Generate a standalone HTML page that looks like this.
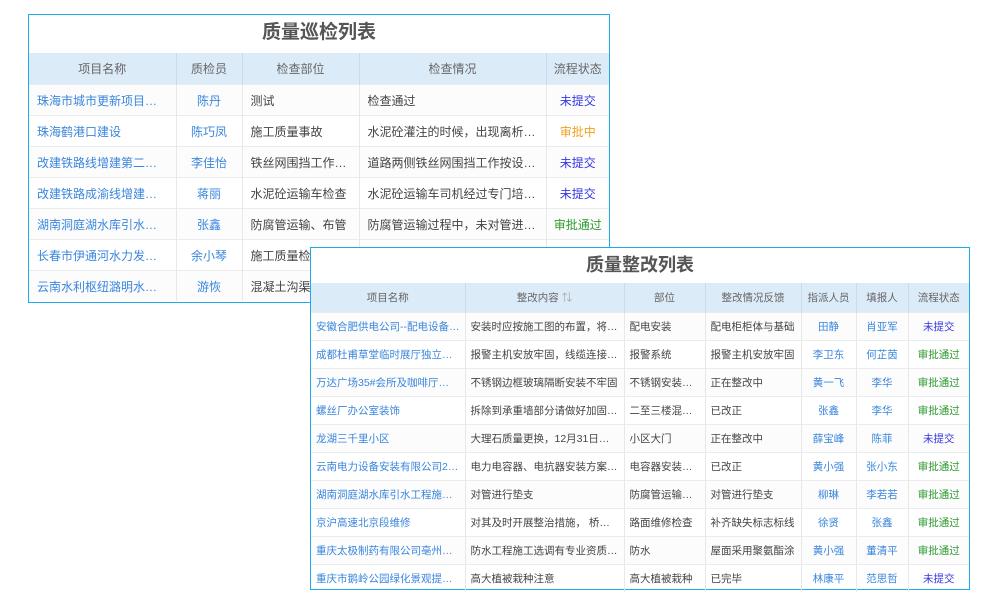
<!DOCTYPE html>
<html><head><meta charset="utf-8"><style>
body{margin:0;width:1000px;height:600px;background:#fff;position:relative;overflow:hidden;font-family:"Liberation Sans","Noto Sans CJK SC",sans-serif;}
.box{position:absolute;border:1px solid #1fa9ec;background:#fff;box-sizing:border-box;}
.title{text-align:center;font-weight:bold;color:#555;font-size:19px;}
table{border-collapse:collapse;table-layout:fixed;width:100%;}
th{background:#dcebf8;color:#666;font-weight:normal;border-right:1px solid #c9dcef;font-size:12px;}
td{border-right:1px solid #e8e8e8;border-top:1px solid #ececec;white-space:nowrap;overflow:hidden;text-overflow:ellipsis;color:#444;}
tr:nth-child(even) td{background:#fcfcfd;}
th:last-child,td:last-child{border-right:none;}
.l{color:#3a86dc;}.c{text-align:center;}
.u{color:#3535e6;text-align:center;}.p{color:#f2a21f;text-align:center;}.g{color:#2e9a2e;text-align:center;}
#t1 td,#t1 th{font-size:12px;padding:0 8px;height:30px;}
#t1 th{height:31px;}
#t1 td:last-child,#t1 th:last-child{padding:0 2px;}
#t2 td,#t2 th{font-size:10.5px;padding:0 5px;height:27px;}
#t2 th{height:29px;}
#t2 td:last-child,#t2 th:last-child{padding:0 2px;}
</style></head><body>
<div class="box" id="t1" style="left:28px;top:14px;width:582px;height:289px;">
<div class="title" style="height:38px;line-height:36px;">质量巡检列表</div>
<table><colgroup><col style="width:147px"><col style="width:66px"><col style="width:117px"><col style="width:187px"><col></colgroup>
<tr><th>项目名称</th><th>质检员</th><th>检查部位</th><th>检查情况</th><th>流程状态</th></tr>
<tr><td class="l">珠海市城市更新项目紫荆园</td><td class="l c">陈丹</td><td>测试</td><td>检查通过</td><td class="u">未提交</td></tr>
<tr><td class="l">珠海鹤港口建设</td><td class="l c">陈巧凤</td><td>施工质量事故</td><td>水泥砼灌注的时候，出现离析现象</td><td class="p">审批中</td></tr>
<tr><td class="l">改建铁路线增建第二线工程</td><td class="l c">李佳怡</td><td>铁丝网围挡工作检查</td><td>道路两侧铁丝网围挡工作按设计要求</td><td class="u">未提交</td></tr>
<tr><td class="l">改建铁路成渝线增建第二线</td><td class="l c">蒋丽</td><td>水泥砼运输车检查</td><td>水泥砼运输车司机经过专门培训上岗</td><td class="u">未提交</td></tr>
<tr><td class="l">湖南洞庭湖水库引水工程施工</td><td class="l c">张鑫</td><td>防腐管运输、布管</td><td>防腐管运输过程中，未对管进行垫支</td><td class="g">审批通过</td></tr>
<tr><td class="l">长春市伊通河水力发电站工程</td><td class="l c">余小琴</td><td>施工质量检查</td><td></td><td></td></tr>
<tr><td class="l">云南水利枢纽潞明水库工程</td><td class="l c">游恢</td><td>混凝土沟渠工程</td><td></td><td></td></tr>
</table></div>
<div class="box" id="t2" style="left:310px;top:247px;width:660px;height:343px;">
<div class="title" style="height:35px;line-height:34px;font-size:18px;">质量整改列表</div>
<table><colgroup><col style="width:154px"><col style="width:159px"><col style="width:81px"><col style="width:96px"><col style="width:55px"><col style="width:52px"><col></colgroup>
<tr><th>项目名称</th><th>整改内容 <span style="color:#aaa">⇅</span></th><th>部位</th><th>整改情况反馈</th><th>指派人员</th><th>填报人</th><th>流程状态</th></tr>
<tr><td class="l">安徽合肥供电公司--配电设备安装</td><td>安装时应按施工图的布置，将配电柜</td><td>配电安装</td><td>配电柜柜体与基础</td><td class="l c">田静</td><td class="l c">肖亚军</td><td class="u">未提交</td></tr>
<tr><td class="l">成都杜甫草堂临时展厅独立展柜</td><td>报警主机安放牢固，线缆连接可靠</td><td>报警系统</td><td>报警主机安放牢固</td><td class="l c">李卫东</td><td class="l c">何芷茵</td><td class="g">审批通过</td></tr>
<tr><td class="l">万达广场35#会所及咖啡厅空调</td><td>不锈钢边框玻璃隔断安装不牢固</td><td>不锈钢安装工程</td><td>正在整改中</td><td class="l c">黄一飞</td><td class="l c">李华</td><td class="g">审批通过</td></tr>
<tr><td class="l">螺丝厂办公室装饰</td><td>拆除到承重墙部分请做好加固处理</td><td>二至三楼混凝土</td><td>已改正</td><td class="l c">张鑫</td><td class="l c">李华</td><td class="g">审批通过</td></tr>
<tr><td class="l">龙湖三千里小区</td><td>大理石质量更换，12月31日之前完成</td><td>小区大门</td><td>正在整改中</td><td class="l c">薛宝峰</td><td class="l c">陈菲</td><td class="u">未提交</td></tr>
<tr><td class="l">云南电力设备安装有限公司2020</td><td>电力电容器、电抗器安装方案，请</td><td>电容器安装工程</td><td>已改正</td><td class="l c">黄小强</td><td class="l c">张小东</td><td class="g">审批通过</td></tr>
<tr><td class="l">湖南洞庭湖水库引水工程施工I标</td><td>对管进行垫支</td><td>防腐管运输布管</td><td>对管进行垫支</td><td class="l c">柳琳</td><td class="l c">李若若</td><td class="g">审批通过</td></tr>
<tr><td class="l">京沪高速北京段维修</td><td>对其及时开展整治措施， 桥头跳车</td><td>路面维修检查</td><td>补齐缺失标志标线</td><td class="l c">徐贤</td><td class="l c">张鑫</td><td class="g">审批通过</td></tr>
<tr><td class="l">重庆太极制药有限公司亳州中药厂</td><td>防水工程施工选调有专业资质的队伍</td><td>防水</td><td>屋面采用聚氨酯涂</td><td class="l c">黄小强</td><td class="l c">董清平</td><td class="g">审批通过</td></tr>
<tr><td class="l">重庆市鹅岭公园绿化景观提升工程</td><td>高大植被栽种注意</td><td>高大植被栽种</td><td>已完毕</td><td class="l c">林康平</td><td class="l c">范思哲</td><td class="u">未提交</td></tr>
</table></div>
</body></html>
